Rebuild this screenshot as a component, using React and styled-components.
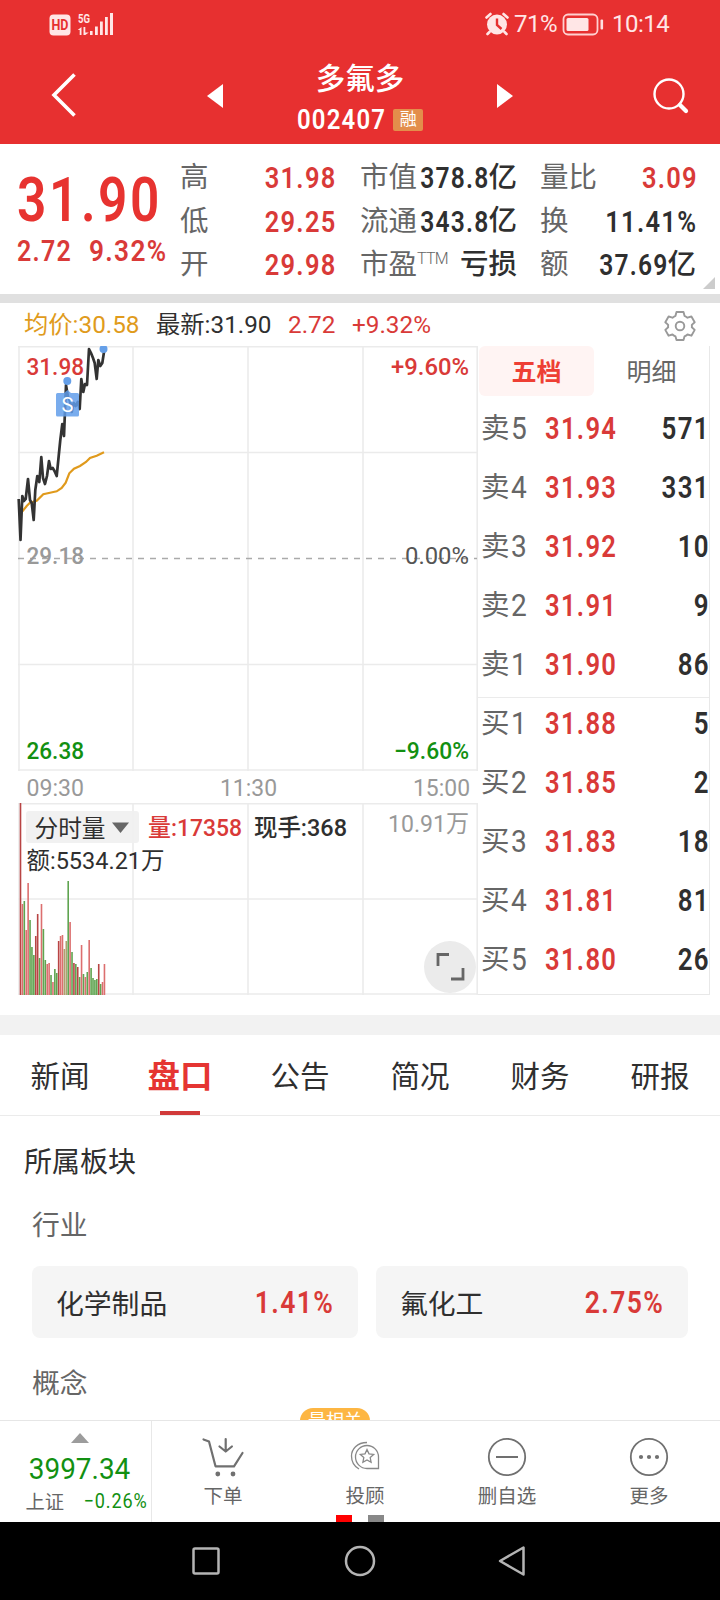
import React from "react";
import styled, { createGlobalStyle } from "styled-components";

const red = "#d93a38";
const green = "#129012";
const dark = "#2f2f2f";
const grey = "#666";

const stats = [
  [
    ["高", "31.98", red],
    ["低", "29.25", red],
    ["开", "29.98", red],
  ],
  [
    ["市值", "378.8", dark, "亿"],
    ["流通", "343.8", dark, "亿"],
    ["市盈", "", dark, "亏损", "TTM"],
  ],
  [
    ["量比", "3.09", red],
    ["换", "11.41%", dark],
    ["额", "37.69", dark, "亿"],
  ],
];

const orders = [
  ["卖", "5", "31.94", "571"],
  ["卖", "4", "31.93", "331"],
  ["卖", "3", "31.92", "10"],
  ["卖", "2", "31.91", "9"],
  ["卖", "1", "31.90", "86"],
  ["买", "1", "31.88", "5"],
  ["买", "2", "31.85", "2"],
  ["买", "3", "31.83", "18"],
  ["买", "4", "31.81", "81"],
  ["买", "5", "31.80", "26"],
];

const tabs = ["新闻", "盘口", "公告", "简况", "财务", "研报"];

const priceLine =
  "18.7,499 20.5,540 22.3,496 24,501 25.7,499 28,479 30,500 31.7,503 33.7,520 35.3,490 37.3,476 39.3,482 41.3,457 43,478 45,484 47,476 49,461 50.7,469 52.7,468 54.5,471 56.7,476 58.7,456 60.3,440 62.3,424 64,436 66,385 68,397 70,401 71.7,412 73.7,403 75.7,406 77.7,402 79.7,409 81.3,379 83.3,392 85,384 87,385 89,349 91,353 93,358 94.7,363 96.7,379 98.3,360 100.3,366 102.3,363 104.3,350";
const averageLine =
  "20.5,513 22.7,511 26.7,506 30,502.7 36.7,500.7 43.3,494.3 50,492.7 56.7,491.3 61.7,488 65.7,482.7 69.3,473.3 74,468.7 80,466 86,462 90,458 96.7,455.7 104,452.3";

// r = up, g = down, o = flat; numbers are bar heights
const volumes = [
  ["d", 192], ["r", 91], ["g", 94], ["r", 65], ["r", 112], ["g", 75], ["g", 48],
  ["g", 40], ["d", 59], ["d", 81], ["g", 37], ["r", 91], ["g", 66], ["g", 35],
  ["r", 31], ["r", 32], ["g", 20], ["r", 13], ["g", 26], ["g", 22], ["d", 54],
  ["r", 59], ["r", 60], ["o", 46], ["o", 54], ["g", 114], ["r", 73], ["g", 43],
  ["d", 32], ["g", 31], ["d", 28], ["g", 18], ["r", 50], ["g", 21], ["r", 18],
  ["g", 23], ["r", 55], ["g", 27], ["g", 17], ["g", 15], ["g", 16], ["d", 31],
  ["g", 11], ["r", 13], ["r", 31],
];
const barColor = { d: "#b84444", r: "#dc6f6f", g: "#5fa450", o: "#b0a070" };

const StatusIcons = () => (
  <svg width="68" height="26" viewBox="48 11 68 26" fill="#ffe6e6">
    <rect x="49.5" y="14.5" width="21" height="21" rx="4" />
    <text x="60" y="30" fontSize="14" fontWeight="700" fill="#e63030" textAnchor="middle" textLength="17" lengthAdjust="spacingAndGlyphs">HD</text>
    <text x="78" y="23" fontSize="13" fontWeight="700" textLength="12" lengthAdjust="spacingAndGlyphs">5G</text>
    <path d="M81.500 27v8h-1.800v-5h-2zM83.500 27h1.800v5.500h3.500l-3.500 2.500h-1.800z" />
    <path d="M90 31h2.600v4H90zM95 26.500h2.800v8.500H95zM100 21.500h2.800V35H100zM105 17h2.800v18H105zM110 13h3v22h-3z" />
  </svg>
);

const AlarmIcon = () => (
  <svg width="24" height="24" viewBox="0 0 24 24">
    <circle cx="12" cy="12.500" r="10" fill="#ffe6e6" />
    <path d="M1.500 5.500 5.500 2M22.500 5.500 18.500 2M4.500 20 2.500 22M19.500 20l2 2" stroke="#ffe6e6" strokeWidth="2.600" strokeLinecap="round" />
    <path d="M12 6.500V13l4.500 4" stroke="#e63030" strokeWidth="2.400" fill="none" />
  </svg>
);

const BatteryIcon = () => (
  <svg width="42" height="24" viewBox="0 0 42 24">
    <rect x="1.500" y="2.500" width="34" height="20" rx="4.500" fill="none" stroke="#ffd0d0" strokeWidth="1.800" />
    <rect x="4.500" y="6" width="22" height="13" rx="1.500" fill="#ffe6e6" />
    <rect x="38.500" y="7.500" width="2.600" height="10" rx="1" fill="#ffe0e0" />
  </svg>
);

const GearIcon = () => (
  <svg width="32" height="32" viewBox="-16 -16 32 32" fill="none" stroke="#999" strokeWidth="1.900" strokeLinejoin="round">
    <path d="M-3.500-14h7l1 3.800q1.600.7 3 1.900l3.900-1.200 3.300 5.800-2.900 2.600q.3 1.200 0 2.400l2.900 2.600-3.300 5.800-3.900-1.200q-1.400 1.200-3 1.900l-1 3.600h-7l-1-3.600q-1.600-.7-3-1.900l-3.900 1.200-3.300-5.800 2.900-2.600q-.3-1.200 0-2.400l-2.900-2.600 3.300-5.800 3.900 1.200q1.400-1.200 3-1.900z" />
    <circle r="4.300" />
  </svg>
);

const ChartLabel = (props) => <text lengthAdjust="spacingAndGlyphs" {...props} />;

const Chart = () => (
  <svg width="478" height="672" viewBox="0 346 478 672">
    <g stroke="#ebebeb" strokeWidth="1.600" fill="none">
      <path d="M18 346.800H478M18 452.500H478M18 664.500H478M18 770H478M18 803.700H478M18 899H478M18 994H478" />
      <path d="M19 346V771M133 346V771M248 346V771M363 346V771M477.200 346V771" />
      <path d="M19 803V995M133 803V995M248 803V995M363 803V995M477.200 803V995" />
    </g>
    <path d="M18 558.500H477" stroke="#aaa" strokeWidth="1.600" strokeDasharray="6 6" />
    <polyline points={averageLine} fill="none" stroke="#e09a1c" strokeWidth="2.200" />
    <polyline points={priceLine} fill="none" stroke="#333" strokeWidth="2.700" strokeLinejoin="round" />
    <circle cx="67.300" cy="381" r="4" fill="#659fe8" />
    <circle cx="103.500" cy="349" r="4" fill="#659fe8" />
    <path d="M57.500 393H64l3.500-3 3.500 3h6.500q1.500 0 1.500 1.500V415q0 1.500-1.500 1.500h-20q-1.500 0-1.500-1.500v-20.500q0-1.500 1.500-1.500z" fill="#5f9cea" fillOpacity=".84" />
    <text x="67.500" y="412" fontSize="20" fill="#fff" textAnchor="middle">S</text>

    <g fontSize="24" fontWeight="500">
      <ChartLabel x="26.500" y="375" fill={red} textLength="57.500">31.98</ChartLabel>
      <ChartLabel x="26.500" y="564" fill="#999" textLength="57.500">29.18</ChartLabel>
      <ChartLabel x="26.500" y="759" fill={green} textLength="57.500">26.38</ChartLabel>
      <ChartLabel x="391" y="375" fill={red} textLength="78">+9.60%</ChartLabel>
      <ChartLabel x="405" y="564" fill="#555" fontWeight="400" textLength="64">0.00%</ChartLabel>
      <ChartLabel x="394" y="759" fill={green} textLength="75">−9.60%</ChartLabel>
    </g>
    <g fontSize="24" fill="#999">
      <ChartLabel x="26.500" y="796" textLength="57.500">09:30</ChartLabel>
      <ChartLabel x="220" y="796" textLength="57">11:30</ChartLabel>
      <ChartLabel x="413" y="796" textLength="57">15:00</ChartLabel>
      <ChartLabel x="388" y="832" textLength="81">10.91万</ChartLabel>
    </g>

    {volumes.map(([kind, h], i) => (
      <rect key={i} x={19.7 + i * 1.908} y={995 - h} width="1.600" height={h} fill={barColor[kind]} />
    ))}
    <rect x="26" y="811" width="113" height="32" rx="3" fill="#efefef" fillOpacity=".9" />
    <path d="M112 822.500h17l-8.500 10.500z" fill="#666" />
    <g fontSize="24" fontWeight="500" fill={dark}>
      <ChartLabel x="34.500" y="836.500" fontWeight="400" textLength="71">分时量</ChartLabel>
      <ChartLabel x="148" y="836" fill={red} textLength="94">量:17358</ChartLabel>
      <ChartLabel x="254" y="836" textLength="93">现手:368</ChartLabel>
      <ChartLabel x="26.500" y="869" fontWeight="400" textLength="138">额:5534.21万</ChartLabel>
    </g>
    <circle cx="450" cy="967" r="26" fill="#ebebeb" />
    <path d="M438 966v-11.500h11M463 968v11h-12" stroke="#666" strokeWidth="2.800" fill="none" />
  </svg>
);

const CartIcon = () => (
  <svg width="44" height="44" viewBox="0 0 44 44" fill="none" stroke="#707070" strokeWidth="2.200" strokeLinecap="round" strokeLinejoin="round">
    <path d="M2.500 4.500 8 6.500 14.500 31.300h18.500L41.500 18M24.700 4v12M18.500 11.500l6.200 5 6.200-5" />
    <circle cx="16.800" cy="39" r="2.400" fill="#707070" stroke="none" />
    <circle cx="32" cy="39" r="2.400" fill="#707070" stroke="none" />
  </svg>
);

const AdvisorIcon = () => (
  <svg width="44" height="44" viewBox="343 1435 44 44" fill="none" stroke="#888" strokeWidth="1.300">
    <path d="M367 1445.500a11.500 11.500 0 0 1 11.500 11.500v11.500H367a11.500 11.500 0 0 1 0-23z" />
    <path d="m367 1449.500 2 4.300 4.700.6-3.500 3.200.9 4.700-4.100-2.300-4.100 2.300.9-4.700-3.500-3.200 4.700-.6z" />
    <path d="M367 1442.500c-10 0-15.500 7-15.500 13.500 0 6 3 10.500 7.500 13" />
  </svg>
);

const MinusIcon = () => (
  <svg width="44" height="44" viewBox="-22 -22 44 44" fill="none" stroke="#707070" strokeWidth="1.800">
    <circle r="18.200" />
    <path d="M-11 0H11" strokeWidth="2" />
  </svg>
);

const MoreIcon = () => (
  <svg width="44" height="44" viewBox="-22 -22 44 44" fill="none" stroke="#707070" strokeWidth="1.800">
    <circle r="18.200" />
    <g fill="#707070" stroke="none">
      <circle cx="-8" r="2.100" />
      <circle r="2.100" />
      <circle cx="8" r="2.100" />
    </g>
  </svg>
);

const actions = [
  ["下单", CartIcon],
  ["投顾", AdvisorIcon],
  ["删自选", MinusIcon],
  ["更多", MoreIcon],
];

const App = () => {
  return (
    <Screen>
      <GlobalStyle />
      <StatusBar>
        <StatusIcons />
        <StatusRight>
          <AlarmIcon />
          <StatusText $w={43}>71%</StatusText>
          <BatteryIcon />
          <StatusText $w={60} $gap={3}>10:14</StatusText>
        </StatusRight>
      </StatusBar>

      <Header>
        <svg width="26" height="46" viewBox="0 0 26 46" fill="none" stroke="#fff" strokeWidth="3.600">
          <path d="M23.500 2.500 3 23l20.500 20.500" />
        </svg>
        <svg width="16" height="24" viewBox="0 0 16 24" fill="#fff"><path d="M16 0v24L0 12z" /></svg>
        <StockTitle>
          <StockName>多氟多</StockName>
          <CodeRow>
            <Num $size={28.500} $weight={600} $x={0.84}>002407</Num>
            <MarginTag>融</MarginTag>
          </CodeRow>
        </StockTitle>
        <svg width="16" height="24" viewBox="0 0 16 24" fill="#fff"><path d="M0 0v24l16-12z" /></svg>
        <svg width="38" height="38" viewBox="0 0 38 38" fill="none" stroke="#fff" strokeLinecap="round">
          <circle cx="17" cy="17" r="14.500" strokeWidth="2.400" />
          <path d="m28 28 6 6" strokeWidth="4.200" />
        </svg>
      </Header>

      <QuotePanel>
        <MainPrice>
          <Num $size={60.500} $weight={600} $x={0.85} $color="#e73330">31.90</Num>
          <ChangeRow>
            <Num $size={29.500} $weight={600} $x={0.85}>2.72</Num>
            <Num $size={29.500} $weight={600} $x={0.89}>9.32%</Num>
          </ChangeRow>
        </MainPrice>
        {stats.map((col, i) => (
          <StatColumn key={i}>
            {col.map(([label, value, color, unit, sup]) => (
              <StatRow key={label}>
                <StatLabel>
                  {label}
                  {sup && <sup>{sup}</sup>}
                </StatLabel>
                <StatValue $color={color}>
                  {value && (
                    <Num $size={30} $weight={600} $x={unit ? 0.82 : 0.85} $end $color={color}>{value}</Num>
                  )}
                  {unit}
                </StatValue>
              </StatRow>
            ))}
          </StatColumn>
        ))}
        <Corner />
      </QuotePanel>

      <PriceBar>
        <PriceItem $color="#e09b1c" $w={132}>均价:30.58</PriceItem>
        <PriceItem $color={dark} $w={132}>最新:31.90</PriceItem>
        <PriceItem $color={red} $w={64}>2.72</PriceItem>
        <PriceItem $color={red} $w={84}>+9.32%</PriceItem>
        <GearSlot><GearIcon /></GearSlot>
      </PriceBar>

      <Trading>
        <Chart />
        <OrderBook>
          <BookTabs>
            <BookTab $active>五档</BookTab>
            <BookTab>明细</BookTab>
          </BookTabs>
          {orders.map(([side, level, price, qty]) => (
            <OrderRow key={side + level} $edge={side + level}>
              <OrderLabel>
                {side}
                <Num $size={30.500} $x={0.92} $color={grey}>{level}</Num>
              </OrderLabel>
              <Num $size={30.500} $weight={600} $x={0.84}>{price}</Num>
              <Quantity>
                <Num $size={30.500} $weight={600} $x={0.85} $end $color={dark}>{qty}</Num>
              </Quantity>
            </OrderRow>
          ))}
        </OrderBook>
      </Trading>

      <Tabs>
        {tabs.map((tab) => (
          <Tab key={tab} $active={tab === "盘口"}>{tab}</Tab>
        ))}
      </Tabs>

      <Sector>
        <SectorTitle>所属板块</SectorTitle>
        <SectorSub>行业</SectorSub>
        <SectorCards>
          <SectorCard>
            化学制品
            <Num $size={30.500} $weight={600} $x={0.87} $end>1.41%</Num>
          </SectorCard>
          <SectorCard>
            氟化工
            <Num $size={30.500} $weight={600} $x={0.87} $end>2.75%</Num>
          </SectorCard>
        </SectorCards>
        <SectorSub>概念</SectorSub>
        <RelatedTag>最相关</RelatedTag>
      </Sector>

      <BottomBar>
        <IndexBox>
          <svg width="18" height="10" viewBox="0 0 18 10"><path d="M9 0l9 10H0z" fill="#9c9c9c" /></svg>
          <Num $size={30} $x={0.93} $mid $color={green}>3997.34</Num>
          <IndexRow>
            上证
            <Num $size={21} $x={0.86} $end $color={green}>−0.26%</Num>
          </IndexRow>
        </IndexBox>
        {actions.map(([label, Icon]) => (
          <Action key={label}>
            <Icon />
            {label}
          </Action>
        ))}
        <Dots>
          <Dot $color="#f00" />
          <Dot $color="#888" />
        </Dots>
      </BottomBar>

      <NavBar>
        <svg width="340" height="34" viewBox="190 1544 340 34" fill="none" stroke="#b4b4b4" strokeWidth="2.500" strokeLinejoin="round">
          <rect x="193.500" y="1548.500" width="25" height="25" rx="1.500" />
          <circle cx="360" cy="1561" r="14" />
          <path d="M523.500 1547.500v27l-23.500-13.500z" />
        </svg>
      </NavBar>
    </Screen>
  );
};

export default App;

const GlobalStyle = createGlobalStyle`
  * {
    box-sizing: border-box;
  }
  body {
    margin: 0;
    background: #fff;
    font-family: Roboto, "Noto Sans CJK SC", sans-serif;
  }
  svg {
    display: block;
    flex: none;
  }
`;

const Screen = styled.div`
  display: flex;
  flex-direction: column;
  width: 720px;
  height: 1600px;
  overflow: hidden;
  color: ${dark};
`;

// tall narrow digits
const Num = styled.span`
  display: inline-block;
  font-family: Roboto, sans-serif;
  font-size: ${(p) => p.$size}px;
  font-weight: ${(p) => p.$weight || 400};
  line-height: 1;
  letter-spacing: 0.05em;
  margin-right: ${(p) => (p.$end ? "-0.05em" : 0)};
  margin-left: ${(p) => (p.$end ? "-0.5em" : 0)};
  white-space: nowrap;
  color: ${(p) => p.$color || "inherit"};
  transform: scaleX(${(p) => p.$x});
  transform-origin: ${(p) => (p.$mid ? "center" : p.$end ? "right" : "left")};
`;

const StatusBar = styled.div`
  display: flex;
  align-items: center;
  justify-content: space-between;
  height: 48px;
  padding: 0 48px;
  background: #e73030;
`;

const StatusRight = styled.div`
  display: flex;
  align-items: center;
  gap: 5px;
`;

const StatusText = styled.span`
  width: ${(p) => p.$w}px;
  margin-left: ${(p) => p.$gap || 0}px;
  font-size: 24px;
  line-height: 1;
  white-space: nowrap;
  color: #ffe6e6;
  letter-spacing: -0.5px;
`;

const Header = styled.div`
  display: grid;
  grid-template-columns: 156px 62px 228px 155px 1fr;
  align-items: center;
  height: 96px;
  padding: 0 0 0 51px;
  background: #e73030;
  color: #fff;

  & > svg:first-child {
    margin-top: -3px;
  }
`;

const StockTitle = styled.div`
  display: flex;
  flex-direction: column;
  align-items: center;
  gap: 5px;
  width: 182px;
  margin-top: 6px;
`;

const StockName = styled.div`
  font-size: 29.5px;
  font-weight: 500;
  line-height: 37px;
`;

const CodeRow = styled.div`
  display: flex;
  align-items: center;
  height: 34px;

  & > span:first-child {
    margin-right: -10px;
  }
`;

const MarginTag = styled.span`
  width: 30px;
  height: 22px;
  border-radius: 2px;
  background: #e38e4b;
  font-size: 17px;
  line-height: 21px;
  text-align: center;
`;

const QuotePanel = styled.div`
  position: relative;
  display: grid;
  grid-template-columns: 137px 155px 157px 154px;
  column-gap: 25px;
  height: 159px;
  padding: 12px 0 0 18px;
  border-bottom: 9px solid #e0e0e0;
  justify-content: start;

  & > :nth-child(4) {
    margin-left: -2px;
  }
`;

const MainPrice = styled.div`
  padding-top: 15px;
  margin-left: -1px;
  white-space: nowrap;
  color: ${red};
`;

const ChangeRow = styled.div`
  display: flex;
  gap: 7px;
  margin-top: 5px;
`;

const StatColumn = styled.div`
  min-width: 0;
`;

const StatRow = styled.div`
  display: flex;
  align-items: center;
  justify-content: space-between;
  height: 43.7px;
`;

const StatLabel = styled.span`
  padding-top: 1px;
  font-size: 28.5px;
  line-height: 1;
  white-space: nowrap;
  color: ${grey};

  & > sup {
    font-size: 16px;
    font-weight: 300;
    letter-spacing: -0.8px;
    line-height: 0;
    vertical-align: 10px;
  }
`;

const StatValue = styled.span`
  display: flex;
  align-items: center;
  font-size: 28.5px;
  font-weight: 500;
  line-height: 1;
  white-space: nowrap;
  color: ${(p) => p.$color};
`;

const Corner = styled.div`
  position: absolute;
  right: 5px;
  bottom: 5px;
  border-left: 12px solid transparent;
  border-bottom: 12px solid #ccc;
`;

const PriceBar = styled.div`
  display: flex;
  align-items: center;
  height: 43px;
  padding: 2px 24px 0 24px;
`;

const PriceItem = styled.span`
  width: ${(p) => p.$w}px;
  font-size: 24.3px;
  line-height: 1;
  white-space: nowrap;
  color: ${(p) => p.$color};
`;

const GearSlot = styled.div`
  margin-left: auto;
`;

const Trading = styled.div`
  display: flex;
  height: 689px;
  border-bottom: 20px solid #f2f2f2;
`;

const OrderBook = styled.div`
  width: 232px;
  height: 649px;
  border-right: 1px solid #e8e8e8;
  border-bottom: 1px solid #e8e8e8;
`;

const BookTabs = styled.div`
  display: flex;
  height: 54px;
  padding-left: 1px;
`;

const BookTab = styled.div`
  width: 115px;
  height: 50px;
  border-radius: 6px;
  font-size: 25px;
  line-height: 54px;
  text-align: center;
  font-weight: ${(p) => (p.$active ? 700 : 400)};
  color: ${(p) => (p.$active ? "#ee3f34" : grey)};
  background: ${(p) => (p.$active ? "#fff4f3" : "none")};
`;

// the divider between asks and bids sits slightly below the middle
const OrderRow = styled.div`
  display: grid;
  grid-template-columns: 64px 80px 1fr;
  align-items: center;
  height: ${(p) => (p.$edge === "卖1" ? 62 : p.$edge === "买1" ? 56 : 59)}px;
  padding: 0 1px ${(p) => (p.$edge === "卖1" || p.$edge === "买1" ? 3 : 0)}px 3px;
  border-bottom: 1px solid ${(p) => (p.$edge === "卖1" ? "#ebebeb" : "transparent")};
  color: ${red};
`;

const OrderLabel = styled.div`
  display: flex;
  align-items: center;
  gap: 1px;
  padding-top: 1px;
  font-size: 28.5px;
  line-height: 1;
  color: ${grey};
`;

const Quantity = styled.div`
  text-align: right;
`;

const Tabs = styled.div`
  display: grid;
  grid-template-columns: repeat(6, 120px);
  height: 81px;
  border-bottom: 1px solid #ebebeb;
`;

const Tab = styled.div`
  display: flex;
  flex-direction: column;
  align-items: center;
  font-size: ${(p) => (p.$active ? 32.5 : 29.5)}px;
  font-weight: ${(p) => (p.$active ? 700 : 400)};
  line-height: 84px;
  color: ${(p) => (p.$active ? "#e53532" : dark)};

  &::after {
    content: "";
    width: 40px;
    height: 4px;
    margin-top: -8px;
    background: ${(p) => (p.$active ? "#d13a3a" : "transparent")};
  }
`;

const Sector = styled.div`
  height: 304px;
  padding: 26px 32px 0;
  overflow: hidden;
`;

const SectorTitle = styled.div`
  margin-left: -8px;
  font-size: 28px;
  line-height: 42px;
`;

const SectorSub = styled.div`
  margin-top: 21px;
  font-size: 27.8px;
  line-height: 42px;
  color: ${grey};
`;

const SectorCards = styled.div`
  display: grid;
  grid-template-columns: 326px 312px;
  gap: 18px;
  margin: 19px 0 25px;
`;

const SectorCard = styled.div`
  display: flex;
  align-items: center;
  justify-content: space-between;
  height: 72px;
  padding: 0 25px 0 24px;
  border-radius: 8px;
  background: #f5f5f5;
  font-size: 27.8px;

  & > span {
    margin-top: 2px;
    color: ${red};
  }
`;

const RelatedTag = styled.div`
  width: 70px;
  height: 26px;
  margin: 3px 0 0 268px;
  border-radius: 13px;
  background: #fdb643;
  font-size: 18px;
  line-height: 26px;
  text-align: center;
  color: #fff;
`;

const BottomBar = styled.div`
  position: relative;
  display: grid;
  grid-template-columns: 152px repeat(4, 142px);
  height: 102px;
  border-top: 1px solid #e6e6e6;
  background: #fff;
`;

const IndexBox = styled.div`
  display: flex;
  flex-direction: column;
  align-items: center;
  padding-top: 12px;
  padding-left: 8px;
  border-right: 1px solid #e8e8e8;

  & > span {
    margin-top: 11px;
    letter-spacing: 0;
  }
`;

const IndexRow = styled.div`
  display: flex;
  align-items: center;
  justify-content: space-between;
  width: 121px;
  margin: 3px 0 0 13px;
  font-size: 19.3px;
  color: ${grey};
`;

const Action = styled.div`
  display: flex;
  flex-direction: column;
  align-items: center;
  padding-top: 14px;
  font-size: 19.5px;
  line-height: 36px;
  color: ${grey};
`;

const Dots = styled.div`
  position: absolute;
  left: 336px;
  bottom: 0;
  display: flex;
  gap: 16px;
`;

const Dot = styled.i`
  width: 16px;
  height: 7px;
  background: ${(p) => p.$color};
`;

const NavBar = styled.div`
  display: flex;
  justify-content: center;
  height: 78px;
  padding-top: 22px;
  background: #000;
`;
